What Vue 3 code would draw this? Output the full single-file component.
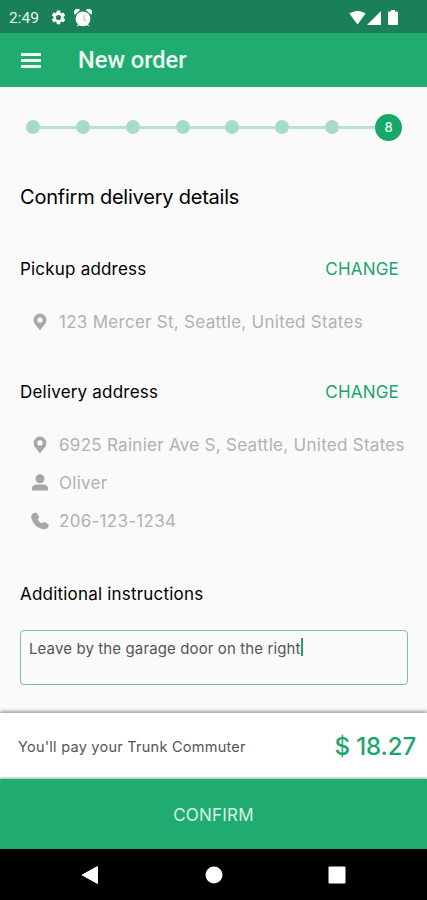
<template>
  <div class="screen">
    <header class="status-bar">
      <span class="clock">2:49</span>
      <svg class="gear" viewBox="0 0 24 24">
        <path d="M19.14 12.94c.04-.3.06-.61.06-.94s-.02-.64-.07-.94l2.03-1.58a.49.49 0 0 0 .12-.61l-1.92-3.32a.49.49 0 0 0-.59-.22l-2.39.96a7 7 0 0 0-1.62-.94l-.36-2.54A.48.48 0 0 0 13.92 2h-3.84a.48.48 0 0 0-.47.41l-.36 2.54a7.4 7.4 0 0 0-1.62.94l-2.39-.96a.48.48 0 0 0-.59.22L2.74 8.87a.48.48 0 0 0 .12.61l2.03 1.58a7.5 7.5 0 0 0 0 1.88l-2.03 1.58a.49.49 0 0 0-.12.61l1.92 3.32c.12.22.37.29.59.22l2.39-.96c.5.38 1.03.7 1.62.94l.36 2.54c.05.24.24.41.47.41h3.84c.24 0 .44-.17.47-.41l.36-2.54a7.4 7.4 0 0 0 1.62-.94l2.39.96c.22.08.47 0 .59-.22l1.92-3.32a.48.48 0 0 0-.12-.61zM12 15.6a3.6 3.6 0 1 1 0-7.2 3.6 3.6 0 0 1 0 7.2z" />
      </svg>
      <svg class="alarm" viewBox="0 0 18 18">
        <circle cx="9" cy="9.8" r="7.4" />
        <path d="M.8 5.8A3.2 3.2 0 0 1 6.2 1zM17.2 5.8A3.2 3.2 0 0 0 11.8 1zM2.5 17.5l2-3 2 1.6zM15.5 17.5l-2-3-2 1.6z" />
        <path class="hands" d="M10 6v4l2.4 2.2" />
      </svg>
      <span class="spacer"></span>
      <svg class="wifi" viewBox="0 0 17 15">
        <path d="M.4 3.6C5 .1 12 .1 16.6 3.6L8.5 14.4z" />
      </svg>
      <svg class="signal" viewBox="0 0 14 14">
        <path d="M14 0v14H0z" />
      </svg>
      <svg class="battery" viewBox="0 0 10 15">
        <path d="M3 0h4v1.5h2q1 0 1 1V14q0 1-1 1H1q-1 0-1-1V2.5q0-1 1-1h2z" />
      </svg>
    </header>

    <div class="app-bar">
      <button class="menu" aria-label="Menu">
        <span></span>
        <span></span>
        <span></span>
      </button>
      <h1 class="app-title">New order</h1>
    </div>

    <main class="content">
      <div class="stepper">
        <template v-for="step in totalSteps" :key="step">
          <span v-if="step === currentStep" class="step current">{{ step }}</span>
          <template v-else>
            <span class="step"></span>
            <span class="step-line"></span>
          </template>
        </template>
      </div>

      <h2 class="page-heading">Confirm delivery details</h2>

      <section v-for="section in sections" :key="section.title" class="address">
        <div class="address-header">
          <h3 class="section-title">{{ section.title }}</h3>
          <button class="change">CHANGE</button>
        </div>
        <ul class="details">
          <li v-for="row in section.rows" :key="row.text" class="detail">
            <svg class="detail-icon" viewBox="0 0 18 18">
              <path :d="icons[row.icon]" fill-rule="evenodd" />
            </svg>
            <span class="detail-text">{{ row.text }}</span>
          </li>
        </ul>
      </section>

      <h3 class="section-title">Additional instructions</h3>
      <div class="instructions">
        <span class="instructions-text">{{ instructions }}</span>
        <span class="caret"></span>
      </div>
    </main>

    <div class="pay-bar">
      <span class="pay-label">You'll pay your Trunk Commuter</span>
      <span class="pay-price">$ 18.27</span>
    </div>
    <button class="confirm">CONFIRM</button>

    <nav class="nav-bar">
      <svg viewBox="0 0 18 20"><path d="M16.5 1.5v17L1.2 10z" stroke-linejoin="round" /></svg>
      <svg viewBox="0 0 18 20"><circle cx="9" cy="10" r="8.5" /></svg>
      <svg viewBox="0 0 18 20"><rect x=".5" y="1.5" width="17" height="17" rx="1" /></svg>
    </nav>
  </div>
</template>

<script setup>
import { ref } from 'vue'

const totalSteps = 8
const currentStep = ref(8)
const instructions = ref('Leave by the garage door on the right')

const icons = {
  pin: 'M9 .6a6.4 6.4 0 0 0-6.4 6.4c0 3.8 3.6 6.3 5.6 9.4q.8 1 1.6 0c2-3.1 5.600-5.600 5.600-9.400A6.400 6.400 0 0 0 9 .6zm0 3.600a2.700 2.700 0 1 1 0 5.400 2.700 2.700 0 0 1 0-5.400z',
  person: 'M9 .3a4.5 4.5 0 1 1 0 9 4.5 4.5 0 0 1 0-9zM.8 15.2c0-3.2 2.6-4.700 5.200-4.700h6c2.600 0 5.200 1.500 5.200 4.700q0 1.300-1.200 1.300H2Q.8 16.500.8 15.200z',
  phone: 'M3.4.7q1.200-.7 2.200.4l2 2.700q.8 1.200-.1 2.300l-.9 1.200c.8 1.800 2.200 3.200 4 4l1.300-.9q1.100-.8 2.200-.2l2.800 1.900q1.100.8.700 2c-.9 2.300-2.700 3.500-4.800 3.200C6.300 16.200 1.300 11.400.2 5.200-.1 3.200 1.400 1.500 3.400.7z'
}

const sections = [
  {
    title: 'Pickup address',
    rows: [{ icon: 'pin', text: '123 Mercer St, Seattle, United States' }]
  },
  {
    title: 'Delivery address',
    rows: [
      { icon: 'pin', text: '6925 Rainier Ave S, Seattle, United States' },
      { icon: 'person', text: 'Oliver' },
      { icon: 'phone', text: '206-123-1234' }
    ]
  }
]
</script>

<style>
body {
  margin: 0;
}
</style>

<style scoped>
.screen {
  display: flex;
  flex-direction: column;
  width: 427px;
  height: 900px;
  overflow: hidden;
  background: #fafafa;
  font-family: Inter, 'Liberation Sans', sans-serif;
  color: #000;
}

h1,
h2,
h3,
ul {
  margin: 0;
  padding: 0;
  list-style: none;
}

button {
  padding: 0;
  border: 0;
  background: none;
  font-family: inherit;
}

.status-bar {
  display: flex;
  flex: none;
  align-items: center;
  box-sizing: border-box;
  height: 33px;
  padding: 2px 29px 0 9px;
  background: #1a8057;
  fill: #fff;
}

.clock {
  width: 41px;
  font-family: Roboto, sans-serif;
  font-size: 15.5px;
  color: #e6f5ee;
}

.gear {
  width: 17px;
  height: 17px;
}

.alarm {
  width: 18px;
  height: 18px;
  margin-left: 7px;
}

.hands {
  fill: none;
  stroke: #a8cfbe;
  stroke-width: 1.2;
}

.spacer {
  flex: 1;
}

.wifi {
  width: 17px;
  height: 15px;
}

.signal {
  width: 14px;
  height: 14px;
  margin-left: 1px;
}

.battery {
  width: 10px;
  height: 15px;
  margin-left: 7px;
}

.app-bar {
  display: flex;
  flex: none;
  align-items: center;
  height: 54px;
  padding-left: 21px;
  background: #20ac70;
}

.menu {
  display: flex;
  flex-direction: column;
  gap: 3px;
  width: 20px;
}

.menu span {
  height: 3px;
  background: #e9f8f0;
}

.app-title {
  margin-left: 37px;
  font-family: Roboto, sans-serif;
  font-size: 23.6px;
  font-weight: 500;
  line-height: 54px;
  color: #effaf5;
}

.content {
  flex: 1;
  padding: 26px 19px 0 20px;
}

.stepper {
  display: flex;
  align-items: center;
  height: 28px;
  padding: 0 6px;
}

.step {
  flex: none;
  width: 14px;
  height: 14px;
  border-radius: 50%;
  background: #a6dbc5;
}

.step-line {
  flex: 1;
  height: 3px;
  background: #b9e2d1;
}

.step.current {
  width: 27px;
  height: 27px;
  background: #17a76b;
  font-size: 13px;
  font-weight: 500;
  line-height: 27px;
  text-align: center;
  color: #e4f6ed;
}

.page-heading {
  margin-top: 42px;
  font-size: 20px;
  font-weight: 400;
  line-height: 28px;
  letter-spacing: -0.22px;
}

.address {
  margin-top: 46px;
}

.address + .address {
  margin-top: 39px;
}

.address-header {
  display: flex;
  align-items: center;
  justify-content: space-between;
  padding-right: 9px;
}

.section-title {
  font-size: 17px;
  font-weight: 400;
  line-height: 24px;
  letter-spacing: 0.2px;
}

.change {
  font-size: 17px;
  line-height: 24px;
  letter-spacing: 0.2px;
  color: #1ba66b;
}

.details {
  margin-top: 22px;
}

.detail {
  display: flex;
  align-items: center;
  height: 38px;
  padding-left: 11px;
}

.detail-icon {
  width: 18px;
  height: 18px;
  fill: #a6a6a6;
}

.detail-text {
  margin-left: 10px;
  font-size: 17px;
  letter-spacing: 0.28px;
  white-space: nowrap;
  color: #b1b1b1;
}

.address + .section-title {
  margin-top: 42px;
}

.instructions {
  display: flex;
  box-sizing: border-box;
  height: 55px;
  margin-top: 24px;
  padding: 7px 8px;
  border: 1px solid #77c5a3;
  border-radius: 4px;
}

.instructions-text {
  font-size: 15px;
  line-height: 22px;
  letter-spacing: 0.12px;
  color: #555;
}

.caret {
  width: 2px;
  height: 18px;
  background: #22a06d;
}

.pay-bar {
  position: relative;
  display: flex;
  flex: none;
  align-items: center;
  justify-content: space-between;
  height: 66px;
  padding: 0 11px 0 18px;
  background: #fff;
  box-shadow: 0 -2px 3px rgba(0, 0, 0, 0.35);
}

.pay-label {
  font-size: 14.5px;
  letter-spacing: 0.25px;
  color: #555;
}

.pay-price {
  font-size: 24px;
  font-weight: 500;
  letter-spacing: -0.1px;
  color: #1ba66b;
}

.confirm {
  position: relative;
  flex: none;
  height: 70px;
  padding-top: 2px;
  background: #20ac70;
  box-shadow: 0 -1px 2px rgba(0, 0, 0, 0.35);
  font-size: 17px;
  letter-spacing: 0.2px;
  color: #d8f2e6;
}

.nav-bar {
  position: relative;
  display: flex;
  flex: none;
  align-items: center;
  justify-content: space-between;
  box-sizing: border-box;
  height: 51px;
  padding: 0 81px;
  background: #000;
}

.nav-bar svg {
  width: 18px;
  height: 20px;
  fill: #fff;
}

.nav-bar path {
  stroke: #fff;
}
</style>
